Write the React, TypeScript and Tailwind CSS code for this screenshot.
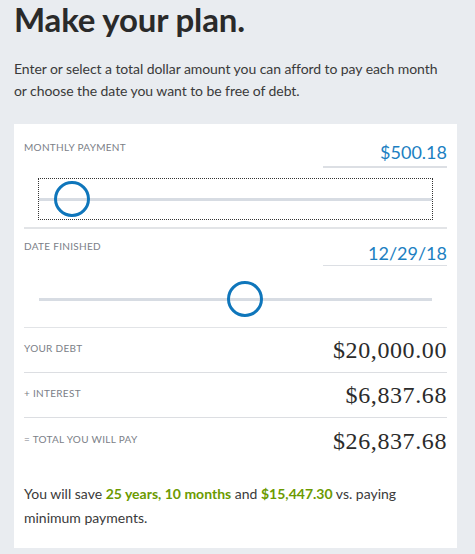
import React from 'react';

const sans = "font-['Lato',sans-serif]";

function FieldLabel({ children }: { children: React.ReactNode }) {
  return (
    <div className="text-[10px] uppercase tracking-[0.03em] text-[#7b8087] leading-none">
      {children}
    </div>
  );
}

function Slider({ left, focused }: { left: string; focused?: boolean }) {
  return (
    <div
      className={`relative mx-[15px] h-[40px] ${focused ? 'outline-1 outline-dotted outline-[#333]' : ''}`}
    >
      <div className="absolute left-0 right-0 top-[19px] h-[3px] bg-[#d7dce3]" />
      <div
        className={`absolute top-[2px] h-[36px] w-[36px] -translate-x-1/2 rounded-full border-[3px] border-[#0f76bb] ${left}`}
      />
    </div>
  );
}

function ResultRow({ label, value, last }: { label: string; value: string; last?: boolean }) {
  return (
    <div className={`flex h-[45px] items-center justify-between ${last ? '' : 'border-b border-[#dcdee2]'}`}>
      <div className="-mt-[4px]">
        <FieldLabel>{label}</FieldLabel>
      </div>
      <span className="font-['Liberation_Serif',serif] text-[24px] tracking-[0.025em] text-[#2b2b2b] leading-none">
        {value}
      </span>
    </div>
  );
}

export default function App() {
  return (
    <div className={`min-h-screen bg-[#e9ecf0] pl-[14px] pr-[18px] ${sans}`}>
      <h1 className="text-[33px] font-bold leading-[38px] tracking-[-0.005em] text-[#2a2a2a]">
        Make your plan.
      </h1>
      <p className="mt-[20px] max-w-[432px] text-[14px] leading-[22px] tracking-[-0.005em] text-[#3a3a3a]">
        Enter or select a total dollar amount you can afford to pay each month or choose the date you
        want to be free of debt.
      </p>

      <div className="mt-[22px] bg-white px-[10px] pt-[18px] pb-[18px]">
        {/* monthly payment */}
        <div className="flex items-start justify-between">
          <FieldLabel>Monthly Payment</FieldLabel>
          <div className="w-[124px] border-b-2 border-[#dcdfe4] pb-[4px] text-right text-[18px] leading-[20px] text-[#1c7fc2]">
            $500.18
          </div>
        </div>
        <div className="mt-[11px]">
          <Slider left="left-[33px]" focused />
        </div>
        <div className="mt-[8px] h-[2px] bg-[#e2e4e7]" />

        {/* date finished */}
        <div className="mt-[12px] flex items-start justify-between">
          <FieldLabel>Date Finished</FieldLabel>
          <div className="mt-[2px] w-[124px] border-b border-[#dcdfe4] pb-[2px] text-right text-[18px] leading-[20px] text-[#1c7fc2]">
            12/29/18
          </div>
        </div>
        <div className="mt-[13px]">
          <Slider left="left-[206px]" />
        </div>
        <div className="mt-[8px] h-px bg-[#e2e4e7]" />

        {/* totals */}
        <ResultRow label="Your Debt" value="$20,000.00" />
        <ResultRow label="+ Interest" value="$6,837.68" />
        <ResultRow label="= Total You Will Pay" value="$26,837.68" last />

        <p className="mt-[19px] text-[14px] leading-[24px] text-[#3a3a3a]">
          You will save <span className="font-bold text-[#6c9a00]">25 years, 10 months</span> and{' '}
          <span className="font-bold text-[#6c9a00]">$15,447.30</span> vs. paying minimum payments.
        </p>
      </div>
    </div>
  );
}
